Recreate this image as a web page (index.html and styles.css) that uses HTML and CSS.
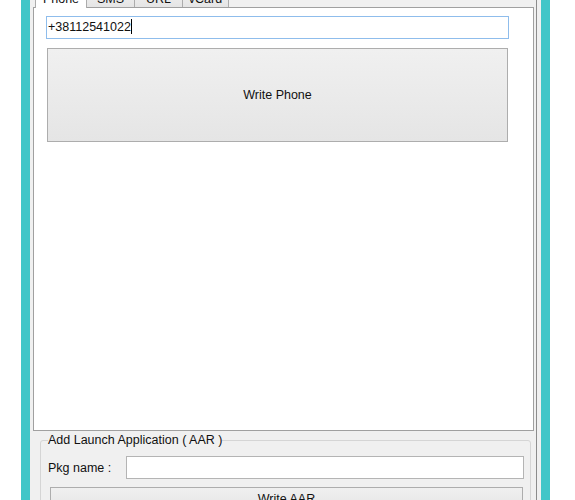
FILE: index.html
```html
<!DOCTYPE html>
<html>
<head>
<meta charset="utf-8">
<link rel="stylesheet" href="styles.css">
</head>
<body>
<div class="window">
  <div class="tabs">
    <div class="tabstrip">
      <div class="tab active">Phone</div>
      <div class="tab tab-sms">SMS</div>
      <div class="tab tab-url">URL</div>
      <div class="tab tab-vcard">vCard</div>
    </div>
    <div class="page">
      <div class="textbox focused">+38112541022<span class="caret"></span></div>
      <div class="button big">Write Phone</div>
    </div>
  </div>
  <fieldset class="group">
    <legend>Add Launch Application ( AAR )</legend>
    <div class="row">
      <label class="label">Pkg name :</label>
      <div class="textbox plain"></div>
    </div>
    <div class="button small">Write AAR</div>
  </fieldset>
</div>
</body>
</html>
```
FILE: styles.css
```css
html, body {
  margin: 0;
  padding: 0;
}
body {
  width: 575px;
  height: 500px;
  overflow: hidden;
  background: #ffffff;
  font-family: "Liberation Sans", Arial, sans-serif;
  font-size: 12.5px;
  color: #111111;
}
.window {
  margin-left: 21px;
  width: 511px;
  height: 500px;
  border-left: 9px solid #41c6c8;
  border-right: 9px solid #41c6c8;
  background: #f0f0f0;
  box-shadow: inset -4px 0 0 #f0f0f0, inset -5px 0 0 #8c8c8c;
  overflow: hidden;
}
.tabs {
  margin-left: 3px;
  width: 501px;
}
.tabstrip {
  display: flex;
  align-items: flex-end;
  height: 18px;
  margin-top: -11px;
  padding-left: 2px;
  position: relative;
  z-index: 1;
}
.tab {
  box-sizing: border-box;
  height: 16px;
  line-height: 15px;
  border-top: 1px solid #acacac;
  border-right: 1px solid #acacac;
  background: linear-gradient(#f0f0f0, #e5e5e5);
  text-align: center;
}
.tab.active {
  width: 52px;
  height: 19px;
  line-height: 17px;
  padding-top: 1px;
  margin-bottom: -1px;
  border-left: 1px solid #acacac;
  background: #ffffff;
}
.tab-sms { width: 48px; }
.tab-url { width: 48px; }
.tab-vcard { width: 46px; }
.page {
  box-sizing: border-box;
  height: 424px;
  border: 1px solid #a0a0a0;
  background: #ffffff;
  padding: 8px 0 0 12px;
}
.textbox {
  box-sizing: border-box;
  height: 23px;
  line-height: 21px;
  padding-left: 1px;
  background: #ffffff;
  white-space: nowrap;
}
.textbox.focused {
  width: 463px;
  border: 1px solid #8fbdec;
}
.caret {
  display: inline-block;
  width: 1px;
  height: 15px;
  background: #000;
  vertical-align: -3px;
}
.button {
  box-sizing: border-box;
  border: 1px solid #adadad;
  background: linear-gradient(#f0f0f0, #e5e5e5);
  display: flex;
  align-items: center;
  justify-content: center;
}
.button.big {
  margin: 9px 0 0 1px;
  width: 461px;
  height: 94px;
}
.group {
  box-sizing: border-box;
  margin: 2px 0 0 10px;
  width: 491px;
  padding: 0 6px 10px 7px;
  border: 1px solid #d5d5d5;
  border-radius: 3px;
  min-width: 0;
}
.group legend {
  padding: 0;
  line-height: 14px;
  font-size: 12.5px;
}
.row {
  display: flex;
  align-items: center;
  margin-top: 9px;
}
.label {
  width: 78px;
  flex: none;
}
.textbox.plain {
  flex: 1;
  border: 1px solid #b4b4b4;
}
.button.small {
  margin: 8px 0 0 2px;
  width: 473px;
  height: 23px;
}
```
